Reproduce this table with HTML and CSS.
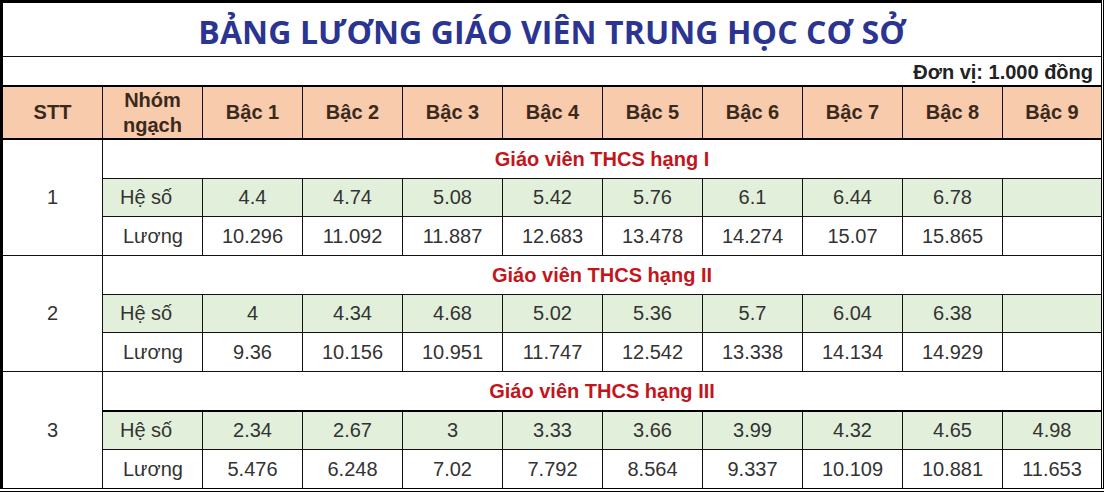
FILE: index.html
```html
<!DOCTYPE html>
<html lang="vi">
<head>
<meta charset="utf-8">
<title>Bảng lương giáo viên THCS</title>
<link rel="stylesheet" href="styles.css">
</head>
<body>
<table class="sheet">
  <colgroup>
    <col class="c-stt"><col class="c-mid"><col class="c-mid"><col class="c-mid"><col class="c-mid"><col class="c-mid"><col class="c-mid"><col class="c-mid"><col class="c-mid"><col class="c-mid"><col class="c-last">
  </colgroup>
  <tr class="r-title"><td colspan="11" class="title">BẢNG LƯƠNG GIÁO VIÊN TRUNG HỌC CƠ SỞ</td></tr>
  <tr class="r-unit"><td colspan="11" class="unit">Đơn vị: 1.000 đồng</td></tr>
  <tr class="r-head">
    <th>STT</th><th class="two">Nhóm<br>ngạch</th><th>Bậc 1</th><th>Bậc 2</th><th>Bậc 3</th><th>Bậc 4</th><th>Bậc 5</th><th>Bậc 6</th><th>Bậc 7</th><th>Bậc 8</th><th>Bậc 9</th>
  </tr>

  <tr class="r-label"><td rowspan="3" class="stt">1</td><td colspan="10" class="label">Giáo viên THCS hạng I</td></tr>
  <tr class="r-coef"><td class="name">Hệ số</td><td>4.4</td><td>4.74</td><td>5.08</td><td>5.42</td><td>5.76</td><td>6.1</td><td>6.44</td><td>6.78</td><td></td></tr>
  <tr class="r-sal"><td class="name sal">Lương</td><td>10.296</td><td>11.092</td><td>11.887</td><td>12.683</td><td>13.478</td><td>14.274</td><td>15.07</td><td>15.865</td><td></td></tr>

  <tr class="r-label"><td rowspan="3" class="stt">2</td><td colspan="10" class="label">Giáo viên THCS hạng II</td></tr>
  <tr class="r-coef"><td class="name">Hệ số</td><td>4</td><td>4.34</td><td>4.68</td><td>5.02</td><td>5.36</td><td>5.7</td><td>6.04</td><td>6.38</td><td></td></tr>
  <tr class="r-sal"><td class="name sal">Lương</td><td>9.36</td><td>10.156</td><td>10.951</td><td>11.747</td><td>12.542</td><td>13.338</td><td>14.134</td><td>14.929</td><td></td></tr>

  <tr class="r-label"><td rowspan="3" class="stt">3</td><td colspan="10" class="label">Giáo viên THCS hạng III</td></tr>
  <tr class="r-coef r-coef-b"><td class="name">Hệ số</td><td>2.34</td><td>2.67</td><td>3</td><td>3.33</td><td>3.66</td><td>3.99</td><td>4.32</td><td>4.65</td><td>4.98</td></tr>
  <tr class="r-sal"><td class="name sal">Lương</td><td>5.476</td><td>6.248</td><td>7.02</td><td>7.792</td><td>8.564</td><td>9.337</td><td>10.109</td><td>10.881</td><td>11.653</td></tr>
</table>
</body>
</html>
```
FILE: styles.css
```css
html, body {
  margin: 0;
  padding: 0;
  background: #ffffff;
}

.sheet {
  border-collapse: collapse;
  table-layout: fixed;
  width: 1103px;
  font-family: "Liberation Sans", Arial, sans-serif;
  font-size: 20px;
  color: #333333;
  border-left: 3px solid #000;
  border-top: 3px solid #000;
  border-right: 3px double #000;
  border-bottom: 4px double #000;
}

.c-stt { width: 101px; }
.c-mid { width: 100px; }
.c-last { width: 100px; }

.sheet td,
.sheet th {
  border: 1px solid #111;
  padding: 0;
  text-align: center;
  vertical-align: middle;
  overflow: hidden;
  white-space: nowrap;
}

.sheet .r-title td { height: 49px; }
.sheet .title {
  font-family: "Open Sans", "Liberation Sans", sans-serif;
  font-weight: 700;
  font-size: 32px;
  line-height: 40px;
  color: #2b3591;
  vertical-align: bottom;
  padding-bottom: 4px;
  letter-spacing: 0.1px;
}

.sheet .r-unit td {
  height: 27px;
  border-bottom: 2px solid #000;
}
.sheet .unit {
  text-align: right;
  font-weight: 700;
  font-size: 20px;
  line-height: 24px;
  color: #222;
  padding-right: 8px;
  vertical-align: bottom;
  padding-bottom: 1px;
}

.sheet .r-head th {
  height: 51px;
  background: #f8cbad;
  font-weight: 700;
  font-size: 20px;
  color: #3a2a1c;
  border-bottom: 2px solid #000;
}
.sheet .r-head th.two {
  line-height: 25px;
}

.sheet .r-label td { height: 38px; }
.sheet .label {
  font-weight: 700;
  font-size: 20px;
  color: #c3161c;
  background: #fff;
}
.sheet .stt {
  background: #fff;
}

.sheet .r-coef td {
  height: 37px;
  background: #e2efda;
}
.sheet .r-coef-b td { border-top: 2px solid #000; }
.sheet .r-sal td {
  height: 38px;
  background: #fff;
}

.sheet .name {
  text-align: left;
  padding-left: 17px;
}
.sheet .name.sal {
  padding-left: 20px;
}
```
